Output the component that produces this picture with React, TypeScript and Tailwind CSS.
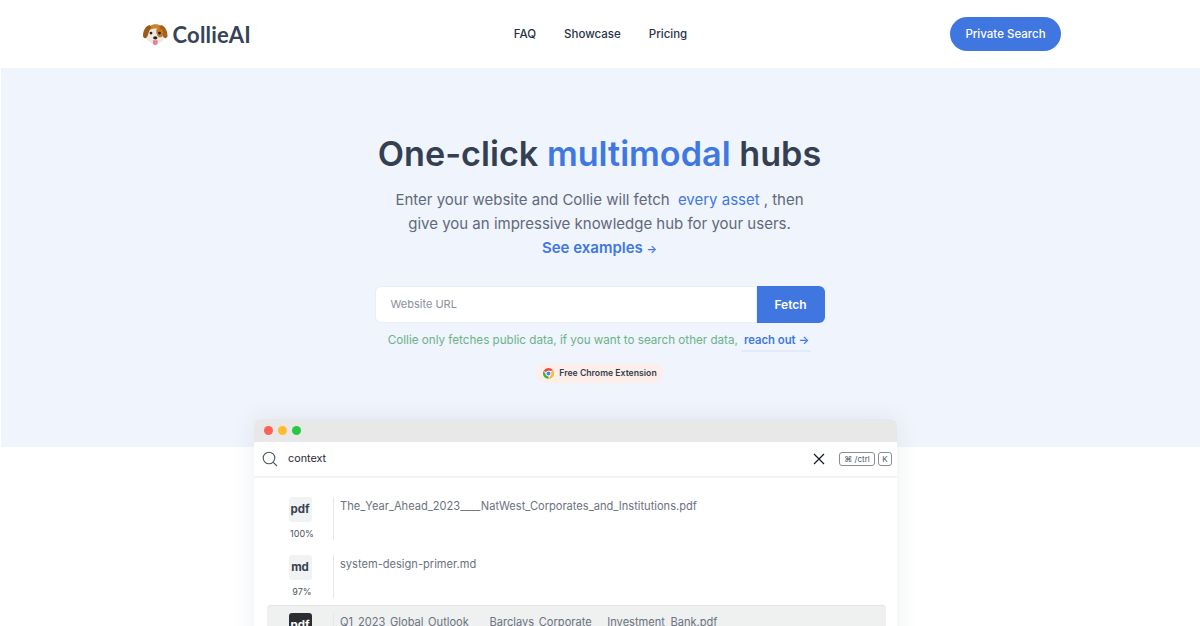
import React from "react";

const FILES = [
  { type: "pdf", score: "100%", name: "The_Year_Ahead_2023____NatWest_Corporates_and_Institutions.pdf" },
  { type: "md", score: "97%", name: "system-design-primer.md" },
  { type: "pdf", score: "96%", name: "Q1_2023_Global_Outlook____Barclays_Corporate___Investment_Bank.pdf", active: true },
];

const DogIcon = () => (
  <svg width="26" height="23" viewBox="0 0 26 23">
    <ellipse cx="13" cy="11" rx="10.500" ry="10.500" fill="#efe9e1" />
    <path d="M5 7 C7 2 10 0.500 13 0.500 C17 0.500 20 2 22 7 L13 5 Z" fill="#c9842d" />
    <path d="M7 1.500 C3 2 0 8 0 12.500 C0 15.500 3 16.500 4.500 14 C5.500 11 6.500 7 9 3.500 Z" fill="#9c5a1a" />
    <path d="M19 1.500 C23 2 26 8 26 12.500 C26 15.500 23 16.500 21.500 14 C20.500 11 19.500 7 17 3.500 Z" fill="#a4601c" />
    <path d="M14.500 6 C17 3.500 21 5 21.500 10 C22 14.500 18 15.500 16 13.500 C14.500 12 13.500 8 14.500 6 Z" fill="#c47a22" />
    <circle cx="8.500" cy="10" r="1.500" fill="#2a1c12" />
    <circle cx="17.500" cy="10" r="1.500" fill="#2a1c12" />
    <path d="M10.500 17.500 H15.500 V20.500 C15.500 23.500 10.500 23.500 10.500 20.500 Z" fill="#ec7f93" />
    <ellipse cx="13" cy="15" rx="2.300" ry="1.700" fill="#2b2220" />
  </svg>
);

const ChromeIcon = () => (
  <svg width="11" height="11" viewBox="0 0 24 24">
    <path d="M12 0 A12 12 0 0 1 22.400 6 H12 A6 6 0 0 0 6.800 9 L1.600 6 A12 12 0 0 1 12 0 Z" fill="#e8453c" />
    <path d="M22.400 6 A12 12 0 0 1 12 24 L17.200 15 A6 6 0 0 0 17.200 9 Z" fill="#f9bb2d" />
    <path d="M1.600 6 L6.800 15 A6 6 0 0 0 12 18 L12 24 A12 12 0 0 1 1.600 6 Z" fill="#4aae48" />
    <circle cx="12" cy="12" r="4.500" fill="#4285f4" />
    <circle cx="12" cy="12" r="5.500" fill="none" stroke="#fff" strokeWidth="1.200" />
  </svg>
);

const SearchIcon = () => (
  <svg width="16" height="16" viewBox="0 0 16 16" fill="none" stroke="#4b5563" strokeWidth="1.100">
    <circle cx="7" cy="7" r="5.800" />
    <path d="M11.300 11.300 L15 15" />
  </svg>
);

const CloseIcon = () => (
  <svg width="12" height="12" viewBox="0 0 12 12" fill="none" stroke="#111827" strokeWidth="1.200">
    <path d="M1 1 L11 11 M11 1 L1 11" />
  </svg>
);

const FileRow = ({ type, score, name, active }: { type: string; score: string; name: string; active?: boolean }) => (
  <div className={`flex h-[58px] pt-[7px] rounded-t border-t ${active ? "bg-[#eff1f1] border-[#e2e4e4]" : "border-transparent"}`}>
    <div className="w-[66px] shrink-0 flex flex-col items-center">
      <div className={`w-[23px] h-[25px] pt-px rounded-[3px] flex items-center justify-center text-[11.500px] font-bold ${active ? "bg-[#2b2d30] text-white" : "bg-[#f1f2f3] text-[#374151]"}`}>
        {type}
      </div>
      <span className="mt-[6px] ml-[4px] text-[9px] leading-[12px] text-[#4b5563]">{score}</span>
    </div>
    <div className="h-[43px] border-l border-[#e5e7eb] pl-[6px] pt-[1px] text-[11.100px] leading-[16px] text-[#6b7280]">
      {name}
    </div>
  </div>
);

export default function App() {
  return (
    <div className="h-[626px] overflow-hidden bg-white font-['Inter',sans-serif] text-[#374151]">
      <header className="h-[68px] pl-[143px] pr-[139px] flex items-center justify-between">
        <div className="w-[108px] flex items-center gap-[5px]">
          <DogIcon />
          <span className="font-['Lato',sans-serif] font-bold text-[22px] tracking-[0.2px] text-[#374357]">CollieAI</span>
        </div>
        <nav className="flex gap-7 pt-[2px] text-[11.500px] font-medium text-[#283246]">
          <a>FAQ</a>
          <a>Showcase</a>
          <a>Pricing</a>
        </nav>
        <button className="w-[111px] h-[34px] pt-[1px] rounded-full bg-[#3f76e0] text-white text-[11.500px] font-medium">Private Search</button>
      </header>

      <section className="h-[379px] ml-px pr-[2px] bg-[#f0f4fc] flex flex-col items-center pt-[63px]">
        <h1 className="text-[34.200px] leading-[46px] font-semibold text-[#343f52]">
          One-click <span className="text-[#3f78e0]">multimodal</span> hubs
        </h1>
        <p className="mt-[11px] w-[430px] text-center text-[15px] leading-[24px] text-[#60697b]">
          Enter your website and Collie will fetch <span className="text-[#3f78e0] px-1">every asset</span>, then give you an impressive knowledge hub for your users.
          <br />
          <a className="font-semibold text-[#3f78e0]">See examples <span className="text-[11px]">→</span></a>
        </p>

        <div className="mt-[25px] w-[450px] h-[37px] flex">
          <div className="flex-1 bg-white rounded-l-md border border-[#e8edf7] pl-[15px] flex items-center text-[11px] text-[#8a8f9c]">Website URL</div>
          <button className="w-[68px] bg-[#3f76e0] rounded-r-md text-white text-xs font-semibold">Fetch</button>
        </div>

        <div className="mt-[9px] flex items-start text-[11.650px] leading-[16px] text-[#6bb38a]">
          <span>Collie only fetches public data, if you want to search other data,</span>
          <a className="ml-[3px] pl-[3px] pr-[2px] pb-[2px] border-b-2 border-[#e3eaf9] text-[11.300px] font-semibold text-[#3f78e0]">reach out →</a>
        </div>

        <div className="mt-[12px] h-[19px] pl-[7px] pr-[6px] rounded-full bg-[#fdeee9] flex items-center gap-[5px] text-[8.700px] font-semibold text-[#343f52]">
          <ChromeIcon />
          Free Chrome Extension
        </div>
      </section>

      <div className="relative -mt-[28px] ml-[254px] w-[643px] bg-white rounded-t-md shadow-[0_0_24px_rgba(30,50,90,0.08)]">
        <div className="h-[23px] bg-[#e8e8e8] rounded-t-md pl-[10px] flex items-center gap-[5px]">
          <span className="w-[9px] h-[9px] rounded-full bg-[#fe5f57]" />
          <span className="w-[9px] h-[9px] rounded-full bg-[#febc2e]" />
          <span className="w-[9px] h-[9px] rounded-full bg-[#28c840]" />
        </div>
        <div className="h-[36px] pl-[8px] pr-[5px] flex items-center border-b-2 border-[#f3f3f3]">
          <SearchIcon />
          <span className="ml-[10px] text-[10.800px] text-[#1f2937] flex-1">context</span>
          <CloseIcon />
          <div className="ml-[14px] flex gap-[3px] text-[8px] text-[#4b5563]">
            <span className="h-[14px] w-[36px] border border-[#8a8d93] rounded-[3px] flex items-center justify-center">⌘ /ctrl</span>
            <span className="h-[14px] w-[14px] border border-[#8a8d93] rounded-[3px] flex items-center justify-center">K</span>
          </div>
        </div>
        <div className="pl-[13px] pr-[11px] pt-[11px]">
          {FILES.map((f) => (
            <FileRow key={f.name} {...f} />
          ))}
        </div>
      </div>
    </div>
  );
}
